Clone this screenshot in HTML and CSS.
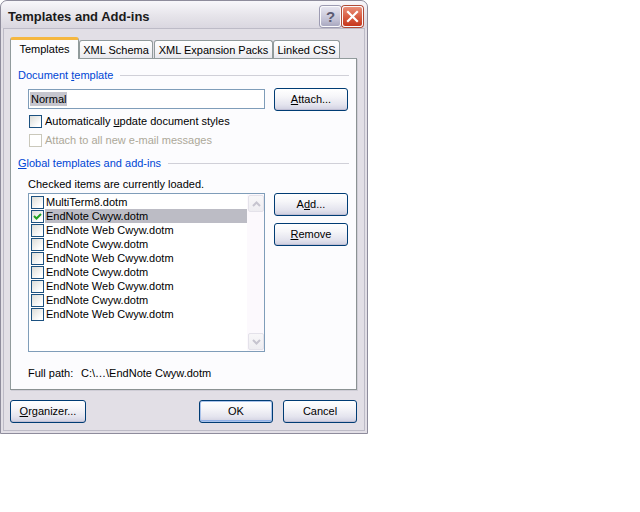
FILE: index.html
```html
<!DOCTYPE html>
<html>
<head>
<meta charset="utf-8">
<link rel="stylesheet" href="styles.css">
</head>
<body>
<div class="window">
  <div class="titlebar">
    <span class="title">Templates and Add-ins</span>
    <div class="tb-buttons">
      <div class="tb help">?</div>
      <div class="tb close"><svg width="13" height="13" viewBox="0 0 13 13"><path d="M2 2 L11 11 M11 2 L2 11" stroke="#fff" stroke-width="2.2" stroke-linecap="square"/></svg></div>
    </div>
  </div>
  <div class="client">
    <div class="tabs">
      <div class="tab active">Templates</div>
      <div class="tab w-schema">XML Schema</div>
      <div class="tab w-packs">XML Expansion Packs</div>
      <div class="tab w-css">Linked CSS</div>
    </div>
    <div class="panel">
      <div class="group"><span class="group-label">Document <u>t</u>emplate</span><span class="group-line"></span></div>
      <div class="row-template">
        <div class="textbox"><span class="sel">Normal</span></div>
        <div class="btn btn-side"><u>A</u>ttach...</div>
      </div>
      <div class="check first"><span class="box"></span><span>Automatically <u>u</u>pdate document styles</span></div>
      <div class="check disabled"><span class="box"></span><span>Attach to all new e-mail messages</span></div>
      <div class="group group2"><span class="group-label"><u>G</u>lobal templates and add-ins</span><span class="group-line"></span></div>
      <div class="note">Checked items are currently loaded.</div>
      <div class="row-list">
        <div class="list">
          <div class="items">
            <div class="item"><span class="box"></span><span class="name">MultiTerm8.dotm</span></div>
            <div class="item selected"><span class="box"><svg width="11" height="11" viewBox="0 0 11 11"><path d="M2 5 L4.5 7.5 L9 3" fill="none" stroke="#21a121" stroke-width="2"/></svg></span><span class="name">EndNote Cwyw.dotm</span></div>
            <div class="item"><span class="box"></span><span class="name">EndNote Web Cwyw.dotm</span></div>
            <div class="item"><span class="box"></span><span class="name">EndNote Cwyw.dotm</span></div>
            <div class="item"><span class="box"></span><span class="name">EndNote Web Cwyw.dotm</span></div>
            <div class="item"><span class="box"></span><span class="name">EndNote Cwyw.dotm</span></div>
            <div class="item"><span class="box"></span><span class="name">EndNote Web Cwyw.dotm</span></div>
            <div class="item"><span class="box"></span><span class="name">EndNote Cwyw.dotm</span></div>
            <div class="item"><span class="box"></span><span class="name">EndNote Web Cwyw.dotm</span></div>
          </div>
          <div class="scrollbar">
            <div class="sb-btn"><svg width="9" height="6" viewBox="0 0 9 6"><path d="M1 5 L4.5 1.5 L8 5" fill="none" stroke="#c6c4cf" stroke-width="2"/></svg></div>
            <div class="sb-track"></div>
            <div class="sb-btn"><svg width="9" height="6" viewBox="0 0 9 6"><path d="M1 1 L4.5 4.5 L8 1" fill="none" stroke="#c6c4cf" stroke-width="2"/></svg></div>
          </div>
        </div>
        <div class="side-buttons">
          <div class="btn btn-side">A<u>d</u>d...</div>
          <div class="btn btn-side"><u>R</u>emove</div>
        </div>
      </div>
      <div class="path"><span class="path-label">Full path:</span><span>C:\…\EndNote Cwyw.dotm</span></div>
    </div>
    <div class="footer">
      <div class="btn btn-org"><u>O</u>rganizer...</div>
      <div class="footer-right">
        <div class="btn btn-foot default">OK</div>
        <div class="btn btn-foot">Cancel</div>
      </div>
    </div>
  </div>
</div>
</body>
</html>
```

FILE: styles.css
```css
* { box-sizing: border-box; }
body {
  margin: 0;
  background: #ffffff;
  font-family: "Liberation Sans", Arial, sans-serif;
  font-size: 11px;
  color: #000;
}
u { text-decoration: underline; text-underline-offset: 1px; }

.window {
  width: 368px;
  height: 434px;
  border: 1px solid #8e8c9c;
  border-radius: 7px 7px 0 0;
  background: #e2dfe6;
  display: flex;
  flex-direction: column;
  padding: 0 2px 2px 2px;
  overflow: hidden;
}
.titlebar {
  height: 27px;
  flex: none;
  margin: 0 -2px;
  display: flex;
  align-items: flex-start;
  justify-content: space-between;
  padding: 0 4px 0 7px;
  background: linear-gradient(#f8f7fb, #e6e4ea 55%, #dad7e0);
  border-radius: 6px 6px 0 0;
}
.title {
  font-weight: bold;
  font-size: 13px;
  line-height: 15px;
  margin-top: 8px;
  color: #1a1a1a;
}
.tb-buttons { display: flex; gap: 1px; margin-top: 5px; }
.tb {
  width: 21px;
  height: 21px;
  border-radius: 3px;
  border: 1px solid #fafafc;
  display: flex;
  align-items: center;
  justify-content: center;
}
.help {
  background: linear-gradient(#e6e5f0, #c0bfd3 70%, #a9a8c0);
  color: #5b5a72;
  font-weight: bold;
  font-size: 15px;
  box-shadow: 0 0 0 1px #9d9bb2;
}
.close {
  background: linear-gradient(#ea8f79, #d65a3f 55%, #c7371d);
  box-shadow: 0 0 0 1px #b04a36;
}

.client {
  flex: 1;
  border: 1px solid #bdbbc7;
  padding: 8px 0 0 6px;
  display: flex;
  flex-direction: column;
}

.tabs { display: flex; height: 21px; position: relative; z-index: 1; }
.tab {
  height: 18px;
  margin-top: 3px;
  border: 1px solid #919b9c;
  border-bottom: none;
  border-radius: 3px 3px 0 0;
  background: linear-gradient(#ffffff, #f4f4f6 60%, #e8e8ee);
  display: flex;
  align-items: center;
  justify-content: center;
  line-height: 13px;
  padding-top: 1px;
}
.tab.active {
  width: 69px;
  height: 22px;
  margin-top: 0;
  background: #fcfcfe;
  border-top: 3px solid #f5b740;
  border-radius: 3px 3px 0 0;
  padding-top: 0;
}
.w-schema { width: 74px; margin-right: 1px; }
.w-packs { width: 119px; }
.w-css { width: 67px; }

.panel {
  width: 347px;
  height: 332px;
  border: 1px solid #919b9c;
  border-right-color: #8b9293;
  border-bottom-color: #8b9293;
  background: #fcfcfe;
  padding: 0 7px;
  box-shadow: 1px 1px 0 #cfcdd6;
}

.group {
  display: flex;
  align-items: center;
  height: 13px;
  margin-top: 10px;
  line-height: 13px;
}
.group2 { margin-top: 10px; }
.group-label { color: #0046d5; white-space: nowrap; }
.group-line {
  flex: 1;
  height: 1px;
  background: #d0d0d8;
  margin-left: 7px;
}

.row-template {
  display: flex;
  margin-top: 6px;
  margin-left: 10px;
  gap: 9px;
}
.textbox {
  width: 237px;
  height: 20px;
  margin-top: 1px;
  border: 1px solid #7f9db9;
  background: #fff;
  padding: 2px 0 0 1px;
  line-height: 14px;
}
.sel { background: #c6c6ce; padding: 0 1px; display: inline-block; }

.btn {
  height: 23px;
  border: 1px solid #003c74;
  border-radius: 3px;
  background: linear-gradient(#ffffff, #f6f6f9 35%, #e4e4ee 75%, #cfcfe0);
  box-shadow: inset 0 -1px 0 #c0bfd4;
  display: flex;
  align-items: center;
  justify-content: center;
  line-height: 13px;
}
.btn-side { width: 74px; }

.check {
  display: flex;
  align-items: center;
  height: 13px;
  margin-left: 11px;
  margin-top: 6px;
  line-height: 13px;
}
.check.first { margin-top: 4px; }
.box {
  width: 13px;
  height: 13px;
  flex: none;
  border: 1px solid #1c5180;
  background: linear-gradient(135deg, #dcdcd7, #ffffff 80%);
  display: flex;
  align-items: center;
  justify-content: center;
}
.check .box { margin-right: 3px; }
.check.disabled { color: #aca899; }
.check.disabled .box { border-color: #cac8bb; background: #fff; }

.note { margin-top: 8px; margin-left: 10px; line-height: 13px; height: 13px; }

.row-list { display: flex; margin-top: 2px; margin-left: 10px; gap: 9px; }
.list {
  width: 237px;
  height: 159px;
  border: 1px solid #7f9db9;
  background: #fff;
  display: flex;
}
.items { flex: 1; padding-top: 1px; }
.item { display: flex; align-items: center; height: 14px; }
.item .box { margin-left: 2px; margin-right: 1px; height: 13px; }
.item .name { flex: 1; height: 14px; line-height: 14px; padding-left: 1px; }
.item.selected .name { background: #bcbcc5; }

.scrollbar {
  width: 17px;
  background: #fcf9fd;
  display: flex;
  flex-direction: column;
  padding: 1px 0 1px 1px;
}
.sb-btn {
  width: 16px;
  height: 17px;
  border: 1px solid #e4e2ea;
  border-radius: 2px;
  background: linear-gradient(#f8f7f9, #eeedf1);
  display: flex;
  align-items: center;
  justify-content: center;
}
.sb-track { flex: 1; }

.side-buttons { display: flex; flex-direction: column; gap: 7px; }

.path { margin-top: 15px; margin-left: 10px; line-height: 13px; display: flex; }
.path-label { width: 53px; }

.footer {
  display: flex;
  justify-content: space-between;
  margin-top: 10px;
  width: 347px;
}
.btn-org { width: 76px; }
.footer-right { display: flex; gap: 10px; }
.btn-foot { width: 74px; }
.btn.default { box-shadow: inset 0 0 0 1px #a9c2ea, inset 0 -2px 0 #8fb0e6; }
```
